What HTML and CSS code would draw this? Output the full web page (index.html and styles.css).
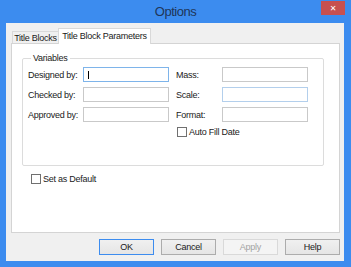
FILE: index.html
```html
<!DOCTYPE html>
<html lang="en">
<head>
    <meta charset="UTF-8">
    <title>Options</title>
    <link rel="stylesheet" href="styles.css">
</head>
<body>
    <div class="window">
        <div class="titlebar">
            <span class="title">Options</span>
            <span class="close">&#x2715;</span>
        </div>
        <div class="client">
            <div class="tabs">
                <div class="tab">Title Blocks</div>
                <div class="tab active">Title Block Parameters</div>
            </div>
            <div class="panel">
                <fieldset class="group">
                    <legend>Variables</legend>
                    <div class="fields">
                        <label>Designed by:</label>
                        <div class="input focused"><span class="caret"></span></div>
                        <label>Mass:</label>
                        <div class="input"></div>

                        <label>Checked by:</label>
                        <div class="input"></div>
                        <label>Scale:</label>
                        <div class="input hover"></div>

                        <label>Approved by:</label>
                        <div class="input"></div>
                        <label>Format:</label>
                        <div class="input"></div>

                        <div class="check auto-fill"><span class="box"></span>Auto Fill Date</div>
                    </div>
                </fieldset>
                <div class="check default"><span class="box"></span>Set as Default</div>
            </div>
            <div class="buttons">
                <button class="default-btn">OK</button>
                <button>Cancel</button>
                <button disabled>Apply</button>
                <button>Help</button>
            </div>
        </div>
    </div>
</body>
</html>
```

FILE: styles.css
```css
body {
    margin: 0;
    padding: 0;
    background: #3c8cef;
    font-family: "Liberation Sans", Arial, sans-serif;
    font-size: 9px;
    letter-spacing: -0.25px;
    white-space: nowrap;
    color: #1a1a1a;
}
.window {
    width: 351px;
    height: 267px;
    display: flex;
    flex-direction: column;
}
.titlebar {
    height: 23px;
    display: flex;
    align-items: center;
    justify-content: center;
    position: relative;
}
.title {
    font-size: 13px;
    letter-spacing: -0.5px;
    color: #1f3659;
}
.close {
    position: absolute;
    top: 1px;
    right: 6px;
    width: 24px;
    height: 14px;
    background: #c75050;
    color: #fff;
    font-family: "DejaVu Sans", sans-serif;
    font-size: 8px;
    font-weight: bold;
    letter-spacing: 0;
    display: flex;
    align-items: center;
    justify-content: center;
}
.client {
    margin: 0 7px 6px 6px;
    height: 238px;
    background: #f0f0f0;
    padding: 5px 4px 0 5px;
    box-sizing: border-box;
    display: flex;
    flex-direction: column;
}
.tabs {
    height: 15px;
    display: flex;
    align-items: flex-end;
    position: relative;
    z-index: 1;
}
.tab {
    height: 12px;
    width: 47px;
    margin-left: 1px;
    box-sizing: border-box;
    border: 1px solid #d9d9d9;
    border-bottom: none;
    background: #f0f0f0;
    display: flex;
    align-items: center;
    justify-content: center;
    line-height: 10px;
}
.tab.active {
    height: 16px;
    width: 93px;
    margin-left: -1px;
    margin-bottom: -1px;
    background: #fff;
    padding-bottom: 1px;
}
.panel {
    height: 190px;
    box-sizing: border-box;
    border: 1px solid #d4d4d4;
    background: #fff;
    padding: 9px 15px 0 10px;
}
.group {
    margin: 0;
    border: 1px solid #dcdcdc;
    border-radius: 2px;
    padding: 4px 0 23px 5px;
}
.group legend {
    margin-left: 3px;
    padding: 0 2px;
    line-height: 10px;
}
.fields {
    display: grid;
    grid-template-columns: 55px 86px 7px 46px 86px;
    grid-auto-rows: 15px;
    row-gap: 5px;
    align-items: center;
}
.fields label:nth-of-type(even) {
    grid-column: 4;
}
.fields .input:nth-of-type(even) {
    grid-column: 5;
}
.input {
    height: 15px;
    box-sizing: border-box;
    border: 1px solid #c9c9c9;
    background: #fff;
    position: relative;
}
.input.focused {
    border-color: #7eb4ea;
}
.input.hover {
    border-color: #b3cfec;
}
.caret {
    position: absolute;
    left: 4px;
    top: 3px;
    width: 1px;
    height: 8px;
    background: #000;
}
.check {
    display: flex;
    align-items: center;
    line-height: 10px;
}
.box {
    width: 10px;
    height: 10px;
    box-sizing: border-box;
    border: 1px solid #707070;
    background: #fff;
    margin-right: 2px;
}
.auto-fill {
    grid-column: 4 / 6;
    align-self: start;
    height: 10px;
    margin-left: 1px;
}
.default {
    margin: 8px 0 0 9px;
}
.buttons {
    margin-top: 6px;
    display: flex;
    justify-content: flex-end;
    gap: 7px;
}
button {
    width: 55px;
    height: 16px;
    padding: 0;
    font-family: inherit;
    font-size: 9px;
    letter-spacing: -0.25px;
    color: #1a1a1a;
    background: linear-gradient(#f0f0f0, #e5e5e5);
    border: 1px solid #acacac;
}
button.default-btn {
    border-color: #3c8cef;
}
button:disabled {
    color: #a3a3a3;
    background: #f4f4f4;
    border-color: #d9d9d9;
}
```
